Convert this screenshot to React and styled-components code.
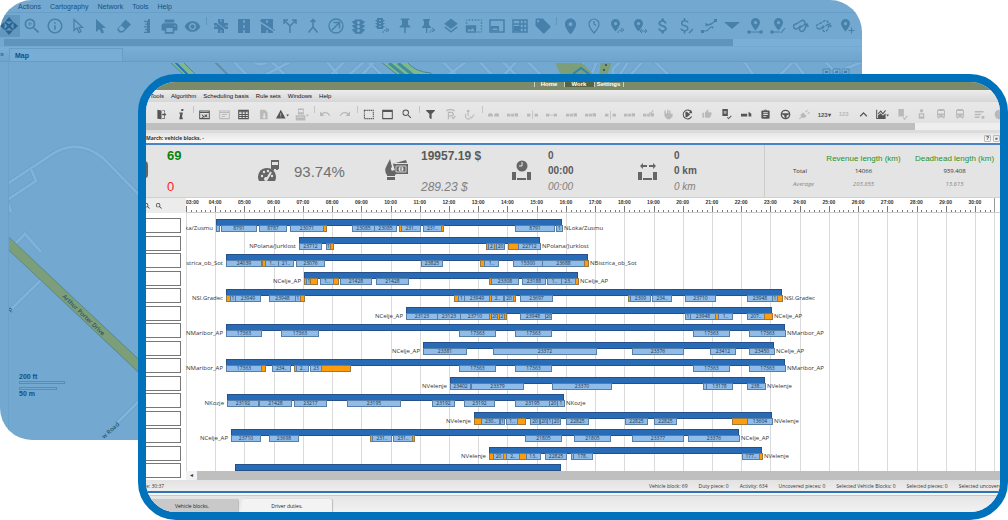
import {
  MdZoomIn,
  MdInfoOutline,
  MdPrint,
  MdVisibility,
  MdLayers,
  MdLocationOn,
  MdLocalOffer,
  MdAttachMoney,
  MdPushPin,
  MdTraffic,
  MdPhotoSizeSelectLarge,
  MdUndo,
  MdRedo,
  MdThumbUp,
  MdAssignment,
  MdKeyboardArrowUp,
  MdDirectionsBus,
  MdSearch,
} from "react-icons/md";
import { FaFilter } from "react-icons/fa";
import styled, { createGlobalStyle } from "styled-components";

const DARK = "#555";

/* timeline units, one unit is about two minutes */
const CHART_WIDTH = 814;
const HOUR = 29.22;
const pct = (units) => `${(units / CHART_WIDTH) * 100}%`;

const hours = Array.from({ length: 28 }, (_, i) => i + 3);
const minorTicks = Array.from({ length: 167 }, (_, i) => i).filter((i) => i % 6);

// [start, end, number], "!" is a piece without passengers
const blocks = [
  {
    stop: "NLoka/Zusmu",
    start: 30,
    end: 376,
    pieces: [
      [30, 33, ""], [35, 70, "8791"], [73, 100, "8787"], [104, 137, "23071"], [137, 140, "!"],
      [166, 188, "23085"], [188, 210, "23085"], [213, 215, "!"], [215, 234, "231.."],
      [237, 255, "231.."], [255, 257, "!"], [329, 368, "8791"], [370, 376, "1"],
    ],
  },
  {
    stop: "NPolana/Jurklost",
    start: 113,
    end: 354,
    pieces: [
      [113, 135, "23712"], [140, 144, "1"], [144, 147, "!"], [300, 302, "!"], [302, 308, "2"],
      [308, 310, "!"], [310, 318, "20"], [322, 332, "!"], [332, 354, "22712"],
    ],
  },
  {
    stop: "NBistrica_ob_Sot",
    start: 40,
    end: 402,
    pieces: [
      [40, 75, "24039"], [76, 79, "!"], [79, 92, "1.."], [92, 107, "21.."], [110, 138, "23076"],
      [235, 256, "23825"], [294, 298, "!"], [298, 312, "1.."], [327, 356, "15300"],
      [356, 398, "23688"], [398, 402, "!"],
    ],
  },
  {
    stop: "NCelje_AP",
    start: 118,
    end: 392,
    pieces: [
      [118, 121, "!"], [120, 125, "1"], [124, 131, "!"], [134, 147, "1.."], [147, 152, "!"],
      [154, 185, "21428"], [190, 222, "21428"], [303, 305, "!"], [305, 332, "23308"],
      [336, 359, "23188"], [361, 375, "1.."], [375, 389, "23.."], [389, 392, "!"],
    ],
  },
  {
    stop: "NSl.Gradec",
    start: 40,
    end: 596,
    pieces: [
      [40, 44, "!"], [44, 49, "1"], [49, 74, "23949"], [83, 109, "23948"], [109, 114, "1"],
      [114, 118, "!"], [268, 272, "!"], [272, 278, "1"], [278, 303, "23949"], [303, 305, "!"],
      [305, 317, "2.."], [318, 327, "20"], [327, 329, "!"], [334, 366, "23697"], [442, 444, "!"],
      [444, 464, "2309"], [466, 485, "234.."], [499, 529, "23710"], [561, 586, "23948"],
      [586, 591, "1"], [591, 596, "!"],
    ],
  },
  {
    stop: "NCelje_AP",
    start: 220,
    end: 586,
    pieces: [
      [220, 251, "23123"], [251, 274, "23123"], [274, 303, "23710"], [303, 305, "!"],
      [305, 312, "20"], [311, 313, "!"], [313, 318, "2"], [318, 320, "!"], [334, 359, "23948"],
      [359, 365, "20"], [499, 504, "1"], [504, 529, "23948"], [529, 532, "!"], [532, 546, "1.."],
      [561, 578, "207.."], [578, 586, "!"],
    ],
  },
  {
    stop: "NMaribor_AP",
    start: 40,
    end: 599,
    pieces: [
      [40, 75, "17363"], [95, 132, "17363"], [273, 309, "17363"], [329, 365, "17363"],
      [507, 543, "17363"], [563, 599, "17363"],
    ],
  },
  {
    stop: "NCelje_AP",
    start: 237,
    end: 588,
    pieces: [
      [237, 280, "23381"], [307, 410, "23372"], [446, 497, "23376"], [524, 549, "23412"],
      [563, 588, "23450"],
    ],
  },
  {
    stop: "NMaribor_AP",
    start: 40,
    end: 599,
    pieces: [
      [40, 75, "17363"], [75, 79, "!"], [86, 104, "234.."], [108, 110, "!"], [110, 122, "2.."],
      [124, 135, "23"], [135, 164, "!"], [273, 309, "17363"], [329, 365, "17363"],
      [507, 543, "17363"], [563, 599, "17363"],
    ],
  },
  {
    stop: "NVelenje",
    start: 264,
    end: 579,
    pieces: [
      [264, 284, "23402"], [285, 337, "23379"], [366, 425, "23370"], [517, 520, ""],
      [520, 546, "13178"], [561, 579, "238.."],
    ],
  },
  {
    stop: "NKozje",
    start: 41,
    end: 378,
    pieces: [
      [41, 72, "23192"], [73, 105, "21428"], [108, 140, "23217"], [161, 214, "23195"],
      [246, 268, "23192"], [278, 308, "23192"], [329, 363, "23195"], [363, 371, "20"],
      [371, 378, "1"],
    ],
  },
  {
    stop: "NVelenje",
    start: 288,
    end: 586,
    pieces: [
      [288, 295, "!"], [295, 313, "230.."], [314, 318, "1"], [320, 331, "1.."], [331, 339, "!"],
      [344, 353, "20"], [354, 361, "20"], [361, 366, "1"], [366, 374, "20"], [380, 402, "22825"],
      [439, 461, "22825"], [468, 490, "22825"], [546, 561, "!"], [561, 586, "13604"],
    ],
  },
  {
    stop: "NCelje_AP",
    start: 45,
    end: 553,
    pieces: [
      [45, 74, "23710"], [83, 112, "23698"], [184, 186, "!"], [186, 205, "231.."],
      [207, 226, "231.."], [226, 228, "!"], [339, 375, "21805"], [388, 424, "21805"],
      [446, 497, "23377"], [502, 553, "23376"],
    ],
  },
  {
    stop: "NVelenje",
    start: 303,
    end: 576,
    pieces: [
      [303, 307, "!"], [307, 317, "20"], [317, 320, "!"], [320, 333, "2.."], [333, 340, "!"],
      [340, 354, "13.."], [359, 380, "22825"], [385, 387, ""], [387, 406, "178.."],
      [556, 573, "177.."], [573, 576, "!"],
    ],
  },
  { stop: "", start: 49, end: 375, pieces: [] },
];

const Draw = ({ children, size = 16, w = size, box = "0 0 16 16" }) => (
  <svg width={w} height={size} viewBox={box} fill="currentColor" stroke="none">
    {children}
  </svg>
);

const Line = (props) => <path fill="none" stroke="currentColor" strokeWidth="1.5" {...props} />;

const pin = "M6.5 1a4.5 4.5 0 0 0-4.5 4.5c0 3 4.5 8 4.5 8s4.5-5 4.5-8A4.5 4.5 0 0 0 6.5 1zm0 3a1.6 1.6 0 1 1 0 3.2 1.6 1.6 0 0 1 0-3.2z";

const mapTools = [
  <Draw key="pan" size={18}>
    <path d="M8 0l3.5 4h-7zM8 16l3.5-4h-7zM0 8l4-3.5v7zM16 8l-4-3.5v7z" />
    <path d="M5 4l3 2.500L11 4l1 1-2.500 3L12 11l-1 1-3-2.500L5 12l-1-1 2.500-3L4 5z" />
  </Draw>,
  <MdZoomIn key="zoom" size={20} />,
  <MdInfoOutline key="info" size={18} />,
  <Draw key="select">
    <Line d="M4 1.5v11l3-2.5 2 4.5 2-1-2-4.2h3.5z" strokeWidth="1.3" />
  </Draw>,
  <Draw key="cursor">
    <path d="M3 1v13l3.500-3 2 4.500 2.500-1-2-4.500h4z" />
  </Draw>,
  <Draw key="eraser">
    <path d="M9.5 1.500l5.500 5-8 8H3.500L1 11.500zM5 7.500L2.500 11l2 2h1.800L9 10.800z" fillRule="evenodd" />
  </Draw>,
  <Draw key="ruler">
    <path d="M9 1h2v14H5v-1.300h3v-1.500H6v-1.200h2V9.500H5V8.200h3V6.700H6V5.500h2V4H5V2.700h4z" />
  </Draw>,
  <MdPrint key="print" size={19} />,
  <MdVisibility key="eye" size={17} />,
  null,
  <Draw key="cross">
    <path d="M5 1h6v4h4v6h-4v4H5v-4H1V5h4z" />
    <path d="M3 4l10 8" stroke="#73a9d0" />
    <path d="M8 1v3M8 12v3M1 8h3M12 8h3" stroke="#73a9d0" />
  </Draw>,
  <Draw key="road">
    <path d="M2 1h12v14H2z" />
    <path d="M8 2v3M8 7v3M8 12v3" stroke="#73a9d0" strokeWidth="1.5" />
  </Draw>,
  <Draw key="noroad">
    <path d="M2 1h12v14H2z" />
    <path d="M8 2v3M8 12v3M1 4l14 9" stroke="#73a9d0" strokeWidth="1.5" />
    <path d="M1 2.500l15 10" stroke="currentColor" />
  </Draw>,
  <Draw key="split">
    <Line d="M8 15V8L3 3M8 8l5-5M2 6V2h4M14 6V2h-4" />
  </Draw>,
  <Draw key="merge">
    <Line d="M8 2v7l-4.500 5.500M8 9l4.500 5.500M5.500 4L8 1.500 10.500 4" />
  </Draw>,
  <Draw key="turn">
    <circle cx="8" cy="8" r="7" fill="none" stroke="currentColor" strokeWidth="1.3" />
    <Line d="M4 12l7-7M5.500 4.500h6v6" />
  </Draw>,
  <MdTraffic key="light" size={19} />,
  <Draw key="lightgo">
    <path d="M3 0h6v2h2L9 4v1h2L9 7v1h2l-2 2v1H3v-1L1 8h2V7L1 5h2V4L1 2h2z" />
    <path d="M5 2h2v1H5zM5 5h2v1H5zM5 8h2v1H5z" fill="#73a9d0" />
    <Line d="M9 15c0-2 1-3 4-3M12 10l3 2-3 2" strokeWidth="1" />
  </Draw>,
  <MdPushPin key="pin" size={18} />,
  <Draw key="pingo">
    <path d="M3 1h7v1.500H9V7l2 2v1H7.300v5H6v-5H2V9l2-2V2.500H3z" />
    <Line d="M10 15c0-2 1-3 3-3M12 10l3 2-3 2" strokeWidth="1" />
  </Draw>,
  <MdLayers key="layers" size={18} />,
  <MdPhotoSizeSelectLarge key="selarea" size={18} />,
  <Draw key="resize">
    <Line d="M1 2h14v12H1z" />
    <path d="M2 8h8v5H2z" />
    <path d="M3 12l2-2 1 1 1-1 2 2z" fill="#73a9d0" />
  </Draw>,
  <Draw key="gridsel">
    <Line d="M1 2h14v12H1zM1 6h14M8 2v12M11.500 2v12M8 10h7" />
    <path d="M2 8h6v5H2z" />
  </Draw>,
  <MdLocalOffer key="tag" size={18} />,
  null,
  <MdLocationOn key="place" size={19} />,
  <Draw key="clock">
    <Line d="M8 15S3 9.500 3 6a5 5 0 0 1 10 0c0 3.500-5 9-5 9zM8 3v3l2 1.500" strokeWidth="1.2" />
  </Draw>,
  <Draw key="placego">
    <path d={pin} />
    <Line d="M9 15c0-2 1-3 4-3M12 10l3 2-3 2" strokeWidth="1" />
  </Draw>,
  <Draw key="placeboth">
    <path d={pin} />
    <Line d="M10 11l-2 2 2 2M13 11l2 2-2 2M9 13h6" strokeWidth="1" />
  </Draw>,
  <MdAttachMoney key="cost" size={20} />,
  <Draw key="costedit">
    <Line d="M10 4.500C9.500 3 8 2.700 6.700 2.700c-4 0-4 4.300 0 5s4.300 5 0 5C5 12.700 3.500 12 3 10.500M6.500 0v3M6.500 13v2.500M11 15l4-4" />
  </Draw>,
  <Draw key="route">
    <Line d="M2 13h3c3 0 2-3 5-4M6 7c3 0 5-1 8-4" strokeWidth="1.2" />
    <path d="M0 12h3v3H0zM13 1h3v3h-3zM4 5l3 1-2 3zM10 8l3 1-2 2z" />
  </Draw>,
  <Draw key="down">
    <path d="M0 4h16l-8 7z" />
  </Draw>,
  <Draw key="stoproute">
    <path d={pin} transform="translate(2 -1)" />
    <Line d="M3 14h10" strokeWidth="1" />
    <circle cx="2" cy="14" r="1.8" />
    <circle cx="14" cy="14" r="1.8" />
  </Draw>,
  <Draw key="stopedit">
    <path d={pin} transform="translate(2 -1)" />
    <Line d="M3 14h7M11 15l4-5" strokeWidth="1.2" />
    <circle cx="2" cy="14" r="1.8" />
  </Draw>,
  <Draw key="loop">
    <Line d="M3 11a2.500 2.500 0 0 1 0-5l5-3a2.500 2.500 0 0 1 3 4L7 9.500a2.500 2.500 0 0 0 2 4c3-.500 3-4 5-7M11.500 7l2.700-1 1 3" strokeWidth="1.4" />
    <Line d="M3 11c2 0 3-2 5-3" strokeWidth="1.4" />
  </Draw>,
  <Draw key="loopdash">
    <Line d="M3 11a2.500 2.500 0 0 1 0-5l5-3a2.500 2.500 0 0 1 3 4L7 9.500a2.500 2.500 0 0 0 2 4c3-.500 3-4 5-7M11.500 7l2.700-1 1 3" strokeWidth="1.4" strokeDasharray="3 1" />
    <Line d="M3 11c2 0 3-2 5-3" strokeWidth="1.4" />
  </Draw>,
  <Draw key="addplace">
    <path d={pin} />
    <Line d="M12.500 9.500v6M9.500 12.500h6" strokeWidth="1.2" />
  </Draw>,
];

const Small = (props) => <Draw size={11} {...props} />;

const train = "M0 7h5v4H0zM6 7h4v4H6zM11 6h5v5h-5z";

// [icon, enabled]
const planTools = [
  [<Small key="exit"><path d="M2 1l6 1v13l-6-1zM9 2h4v3h-1V3H9zM9 14h4v-4h-1v3H9z" /><path d="M9 7h3V5l3 3-3 3V9H9z" /></Small>, true],
  [<Small key="i"><path d="M8 0h3l-.6 3h-3zM5 5h5L8.500 12.500h1.500L9.700 15H4.800l1.400-8H4.700z" /></Small>, true],
  null,
  [<Small key="a"><Line d="M1 3h14v11H1zM1 5h14M4 8l3 3-3 2M8 8l4 4M12 8l-4 4" /></Small>, true],
  [<Small key="b"><Line d="M1 3h14v11H1zM1 5h14M4 8h8M4 11h5" /></Small>, false],
  [<Small key="c"><Line d="M1 2h14v12H1zM1 4h14M1 8h14M1 11h14M6 3v11M10.500 3v11" /></Small>, true],
  [<Small key="d"><path d="M3 1h7l4 4v10H3zM8 6v5H6l3 3 3-3h-2V6z" fillRule="evenodd" /></Small>, false],
  [<Small key="e" w={13} box="0 0 19 16"><path d="M7 1l7 13H0zM15 8h4l-2 3z" /><path d="M6.500 6h1v4h-1zM6.500 11h1v1h-1z" fill="#e4e4e4" /></Small>, true],
  [<Small key="f" size={13} w={14} box="0 0 19 16"><path d="M4 0h8v8H4zM15 8h4l-2 3zM1 9h13v7H1z" /><path d="M5 2h6v3H5zM3 11h9v1H3z" fill="#e4e4e4" /></Small>, false],
  null,
  [<MdUndo key="undo" size={12} />, false],
  [<MdRedo key="redo" size={12} />, false],
  null,
  [<Small key="g"><Line d="M2 2h13v12H2z" strokeDasharray="2 1" /></Small>, true],
  [<Small key="h"><Line d="M1 2h14v12H1zM1 3.500h14" /></Small>, true],
  [<MdSearch key="find" size={12} />, true],
  null,
  [<FaFilter key="filter" size={9} />, true],
  [<Small key="p"><Line d="M5 15V5h4c4 0 4 5 0 5H5M2 3c3-3 9-3 12 0M10 12l2 2 3-4" strokeWidth="1.8" /></Small>, false],
  [<Small key="q"><circle cx="6" cy="3" r="2" /><Line d="M6 5v5M3 7c-3 6 3 9 6 7M8 11l3 2 4-5" /></Small>, false],
  null,
  [<Small key="t1"><path d="M0 8l2-2h3l2 2v3H0zM9 8l2-2h3l2 2v3H9z" /></Small>, false],
  [<Small key="t2"><path d={train} /></Small>, false],
  [<Small key="t3"><path d="M0 7h5v4H0zM11 7h5v4h-5zM7.500 2h1v12h-1z" /></Small>, false],
  [<Small key="t4"><path d="M0 7h5v4H0zM11 7h5v4h-5zM6 8.500h4v1H6z" /></Small>, false],
  [<Small key="t5"><path d={train} /></Small>, false],
  [<Small key="t6"><path d={train} /></Small>, false],
  [<Small key="t7"><path d="M0 7h5v4H0zM11 7h5v4h-5zM7.500 3h1v12h-1z" /></Small>, false],
  [<Small key="t8"><path d={train} /></Small>, false],
  [<Small key="t9"><path d={train} /><Line d="M9 5l2 2 4-5" /></Small>, false],
  [<Small key="hand"><path d="M2 2h2v4h2V1h2v5h1V2h2v5h3v4l-4 4H6L2 10z" /></Small>, false],
  [<Small key="go"><Line d="M14 5a6.500 6.500 0 1 0 0 6" /><path d="M5 4h2l5 4-5 4H5zM13 1l2 5h-5z" /></Small>, true],
  [<MdThumbUp key="thumb" size={10} />, false],
  [<Small key="doc"><path d="M2 0h8v10H2z" /><Line d="M9 12l2 2 4-4" /><path d="M4 3h4v4H4z" fill="#aaa" /></Small>, true],
  [<Small key="move"><path d="M0 7h9v4H0zM11 4l4 3v4h-4z" /></Small>, true],
  [<MdAssignment key="clip" size={11} />, true],
  [<Small key="wheel"><circle cx="8" cy="8" r="6" fill="none" stroke="currentColor" strokeWidth="2" /><path d="M3 6h10v2l-3 1-1 4H7L6 9 3 8z" /></Small>, true],
  [<Small key="plug"><path d="M6 5l5 5-2 2c-2 2-4 1-5 0l-3 3-1-1 3-3c-1-1-1-3 1-4zM9 4l3-3 1 1-3 3zM12 7l3-3 1 1-3 3z" /></Small>, false],
  ["123▾", true],
  ["123", false],
  [<MdKeyboardArrowUp key="up" size={15} />, true],
  [<Small key="chart" w={13} box="0 0 19 16"><Line d="M1 1v13h13M3 7l4-4 3 4 4-5" /><path d="M3 13V9l4-3 3 4 4-4v7zM15 8h4l-2 3z" /></Small>, true],
  [<Small key="doc2"><path d="M2 0h8v11H2z" /><Line d="M9 12l2 3 4-5" /></Small>, false],
  [<Small key="man"><circle cx="8" cy="2.500" r="2.500" /><path d="M4 6h8v8H4z" /><path d="M6 8h4v3H6z" fill="#e4e4e4" /></Small>, false],
  [<MdDirectionsBus key="bus1" size={12} />, false],
  [<MdDirectionsBus key="bus2" size={12} />, false],
  [<Small key="list"><path d="M1 3h13v2H1zM1 7h9v2H1zM1 11h7v2H1zM11 10h4v4h-4z" /></Small>, false],
  [<Small key="globe"><circle cx="8" cy="8" r="7" /></Small>, false],
];

const roads = [
  "M-2 121L42 92Q68 74 94 95L132 134",
  "M-2 137L27 118 22 106",
  "M-2 137L2 149",
  "M7 180L16 171 32 189",
  "M32 217L-2 250",
  "M134 334L107 361",
  "M224 -2L240 14M262 -2L278 14M246 0Q252 3 258 -1M283 -2L256 12",
  "M317 -2L331 14M336 -2L320 14M340 12L356 -2M366 -2L352 13M360 0L374 13",
  "M434 -1L448 13M458 -2L438 13M470 -2L484 13M493 -2L508 13M508 -2L494 13M518 -2L534 14",
  "M575 -2L568 13M588 -2L582 13M612 -2L604 6V13M620 -2L610 13M634 -2L620 14M645 -2L662 14",
  "M735 -2L745 13M770 13L785 -2 796 13M815 -2L828 10M856 -2L830 8",
];

const StreetMap = () => (
  <MapSvg viewBox="0 0 854 377" preserveAspectRatio="xMinYMin slice">
    {roads.map((d) => (
      <g key={d} fill="none">
        <path d={d} stroke="#659cc5" strokeWidth="4" />
        <path d={d} stroke="#7fb3da" strokeWidth="3" />
      </g>
    ))}
    <path d="M-4 177L134 307" stroke="#517f86" strokeWidth="10" />
    <path d="M-4 177L134 307" stroke="#7c9f79" strokeWidth="9" />
    <path d="M161 -1h13l14 14h-12z" fill="#7fb88c" stroke="#4d83a0" />
    <path d="M166 -1l14 14" stroke="#2676c0" strokeWidth="2" />
    <path d="M206 -1l13 13" stroke="#5f8dac" strokeWidth="2" />
    <path d="M372 -1h26q8 10 24 11v3h-32z" fill="#7fb88c" stroke="#4d83a0" />
    <path d="M380 0l16 13M389 0l16 13" stroke="#3f8f9f" strokeWidth="3" />
    <path d="M546 -1h26l14 14h-34z" fill="#7c9f79" />
    <path d="M564 11l8-6 8 6" stroke="#2f86ad" strokeWidth="2" fill="none" />
    <path d="M592 -1h11l-5 14h-8z" fill="#7c9f79" />
    <circle cx="597" cy="2" r="1" fill="#345" />
    <circle cx="595" cy="7" r="1" fill="#345" />
    <path d="M814 12V6h7v6M824 12V6h7v6M833 12V6h7v6" fill="none" stroke="#4d8ab8" />
    <path d="M816 9h3M826 9h3M835 9h3" stroke="#164f7e" />
    <MapText transform="translate(53 234) rotate(44)">Arthur Porter Drive</MapText>
    <MapText transform="translate(95 376) rotate(-42)">w Road</MapText>
    <MapText transform="translate(1 249) rotate(-50)">p</MapText>
  </MapSvg>
);

const Block = ({ stop, start, end, pieces }) => (
  <BlockRow>
    <Stop style={{ right: pct(CHART_WIDTH - start + 3) }}>{stop}</Stop>
    <Bar style={{ left: pct(start), width: pct(end - start) }} />
    {pieces.map(([from, to, number]) => (
      <Piece
        key={from}
        $empty={number === "!"}
        style={{ left: pct(from), width: `calc(${pct(to - from)} + 1px)` }}
      >
        {number !== "!" && number}
      </Piece>
    ))}
    <Stop style={{ left: pct(end + 2) }}>{stop}</Stop>
  </BlockRow>
);

const MapApp = () => (
  <MapWindow>
    <MapMenu>
      {["Actions", "Cartography", "Network", "Tools", "Help"].map((m) => (
        <MapMenuItem key={m}>{m}</MapMenuItem>
      ))}
    </MapMenu>
    <MapToolbar>
      {mapTools.map((icon, i) =>
        icon ? (
          <MapTool key={i} $active={i === 0} aria-label={icon.key}>
            {icon}
          </MapTool>
        ) : (
          <MapSeparator key={i} />
        )
      )}
    </MapToolbar>
    <MapStrip>
      <span />
    </MapStrip>
    <MapTabs>
      <Expand>»</Expand>
      <MapTab>Map</MapTab>
    </MapTabs>
    <MapCanvas>
      <StreetMap />
      <Scale>
        200 ft
        <ScaleLine $width={46} />
        <ScaleLine $width={38} />
        50 m
      </Scale>
    </MapCanvas>
  </MapWindow>
);

const Planner = () => (
  <PlannerWindow>
    <Header>
      <NavItem href="#home">Home</NavItem>
      <NavItem href="#work" $active>
        Work
      </NavItem>
      <NavItem href="#settings">Settings</NavItem>
    </Header>
    <Menu>
      {["Tools", "Algorithm", "Scheduling basis", "Rule sets", "Windows", "Help"].map((m) => (
        <MenuItem key={m}>{m}</MenuItem>
      ))}
    </Menu>
    <Toolbar>
      {planTools.map((tool, i) =>
        tool ? (
          <Tool key={i} $enabled={tool[1]} aria-label={tool[0].key}>
            {tool[0]}
          </Tool>
        ) : (
          <Separator key={i} />
        )
      )}
    </Toolbar>
    <Strip>
      <span />
    </Strip>
    <TitleBar>
      <h1>March: vehicle blocks. -</h1>
      <TitleButton>?</TitleButton>
      <TitleButton>«</TitleButton>
    </TitleBar>
    <Stats>
      <Stat $icon={21}>
        <svg width="10" height="22" viewBox="4 0 10 22" fill="#666">
          <path d="M0 1h3q3 0 3 4v10q0 3-3 3v2H0z" />
        </svg>
        <Values $size={13}>
          <Value $color="#0a820a" $bold>69</Value>
          <Value $color="#f22">0</Value>
        </Values>
      </Stat>
      <Stat $icon={36}>
        <svg width="23" height="24" viewBox="0 0 23 24" fill="#666">
          <path d="M13 1h8v9h-1v1h-2v-1h-2v1h-2v-1h-1z" />
          <path d="M14 3h6v3h-6z" fill="#e4e4e4" />
          <path d="M1 22a9 9 0 1 1 16 0z" />
          <path d="M9 20l4-7" stroke="#e4e4e4" strokeWidth="2" />
          <g fill="#e4e4e4">
            <circle cx="4" cy="17" r="1.2" />
            <circle cx="6" cy="13" r="1.2" />
            <circle cx="10" cy="12" r="1.2" />
            <circle cx="14" cy="17" r="1.2" />
            <circle cx="8" cy="20" r="2" />
          </g>
        </svg>
        <Percent>93.74%</Percent>
      </Stat>
      <Stat $icon={36}>
        <svg width="24" height="24" viewBox="0 0 24 24" fill="#666">
          <path d="M5 0L1 8q-2 4 1 8v1h8v-1l3-3-4-2-2 1q-2-3 0-4z" />
          <path d="M2 18h8v3H2z" />
          <path d="M7 5l14-4 1 3H9zM8 5h15v10H11z" />
          <path d="M11 7h10v6H11z" fill="none" stroke="#ccc" />
          <circle cx="16" cy="10" r="2.5" fill="#ddd" />
          <path d="M16 8v4" stroke="#5c5c5c" />
        </svg>
        <Values $size={12}>
          <Value $bold>19957.19 $</Value>
          <Value $italic>289.23 $</Value>
        </Values>
      </Stat>
      <Stat $icon={36}>
        <svg width="19" height="24" viewBox="0 0 19 24" fill="#666">
          <circle cx="10" cy="7" r="5.5" />
          <path d="M10 3v4H7" stroke="#eee" fill="none" />
          <path d="M0 13h4v8H0zM15 13h4v8h-4zM5 19h9v2H5z" />
        </svg>
        <Values $size={10}>
          <Value $bold>0</Value>
          <Value $bold>00:00</Value>
          <Value $italic>00:00</Value>
        </Values>
      </Stat>
      <Stat $icon={36}>
        <svg width="20" height="24" viewBox="0 0 20 24" fill="#666">
          <path d="M0 13h4v8H0zM15 13h4v8h-4zM5 19h9v2H5zM2 7l3-3v2h4v2H5v2zM18 7l-3-3v2h-4v2h4v2z" />
        </svg>
        <Values $size={10}>
          <Value $bold>0</Value>
          <Value $bold>0 km</Value>
          <Value $italic>0 km</Value>
        </Values>
      </Stat>
      <LengthsPanel>
        <Lengths>
          <thead>
            <tr>
              <td />
              <th>Revenue length (km)</th>
              <th>Deadhead length (km)</th>
            </tr>
          </thead>
          <tbody>
            <tr>
              <td>Total</td>
              <td>14066</td>
              <td>939.408</td>
            </tr>
            <AverageRow>
              <td>Average</td>
              <td>203.855</td>
              <td>13.615</td>
            </AverageRow>
          </tbody>
        </Lengths>
      </LengthsPanel>
    </Stats>
    <Body>
      <Sidebar>
        <SideTools>
          <MdSearch size={8} />
          <MdSearch size={8} />
        </SideTools>
        <SideList>
          {blocks.map((_, i) => (
            <SideItem key={i} />
          ))}
        </SideList>
      </Sidebar>
      <Chart>
        <Ruler>
          {hours.map((h, i) => (
            <Hour key={h} $first={i === 0} style={{ left: pct(i * HOUR) }}>
              {String(h).padStart(2, "0")}:00
            </Hour>
          ))}
          {minorTicks.map((t) => (
            <Tick key={t} style={{ left: pct((t * HOUR) / 6) }} />
          ))}
          <EndMark style={{ left: pct(808) }} />
        </Ruler>
        <Plot>
          {hours.map((h, i) => (
            <GridLine key={h} style={{ left: pct(i * HOUR) }} />
          ))}
          <GridLine style={{ left: pct(808) }} />
          <Rows>
            {blocks.map((block, i) => (
              <Block key={i} {...block} />
            ))}
          </Rows>
        </Plot>
        <ScrollBar>
          <button aria-label="left">◂</button>
          <span />
        </ScrollBar>
      </Chart>
    </Body>
    <StatusBar>
      <Clock>e: 30:37</Clock>
      <span>Vehicle block: 69</span>
      <span>Duty piece: 0</span>
      <span>Activity: 634</span>
      <span>Uncovered pieces: 0</span>
      <span>Selected Vehicle Blocks: 0</span>
      <span>Selected pieces: 0</span>
      <span>Selected uncovered</span>
    </StatusBar>
    <Tabs>
      <Tab $active>Vehicle blocks.</Tab>
      <Tab>Driver duties.</Tab>
    </Tabs>
  </PlannerWindow>
);

const App = () => (
  <Desktop>
    <GlobalStyle />
    <MapApp />
    <Planner />
  </Desktop>
);

export default App;

const GlobalStyle = createGlobalStyle`
  * {
    box-sizing: border-box;
  }

  body {
    margin: 0;
    background-color: #fff;
    font-family: "Liberation Sans", Arial, sans-serif;
    overflow: hidden;
  }

  button {
    font: inherit;
    color: inherit;
    background-color: transparent;
    border: none;
    padding: 0;
    margin: 0;
    flex: none;
    cursor: pointer;
  }

  svg {
    display: block;
    flex: none;
  }
`;

const Desktop = styled.div`
  display: grid;
  grid-template-columns: 1fr;
  align-items: start;

  > * {
    grid-area: 1 / 1;
    min-width: 0;
  }
`;

/* map window */

const MapWindow = styled.section`
  margin-right: 146px;
  border-radius: 32px;
  overflow: hidden;
  background-color: #73a9d0;
  color: #164f7e;
`;

const MapMenu = styled.nav`
  display: flex;
  gap: 9px;
  height: 13px;
  padding-left: 18px;
  border-bottom: 1px solid #689fc8;
`;

const MapMenuItem = styled.button`
  font-size: 7px;
  line-height: 11px;
`;

const MapToolbar = styled.div`
  display: flex;
  align-items: center;
  height: 26px;
  margin-left: -3px;
  color: #4780aa;
`;

const MapTool = styled.button`
  width: 23px;
  height: 22px;
  display: flex;
  align-items: center;
  justify-content: center;
  color: ${(props) => props.$active && "#2b6593"};
  background-color: ${(props) => props.$active && "#6298c0"};
`;

const MapSeparator = styled.span`
  flex: none;
  width: 1px;
  height: 8px;
  margin: 0 2px 10px;
  background-color: #5f97c0;
`;

const MapStrip = styled.div`
  height: 8px;
  display: flex;
  margin-left: 4px;
  padding-bottom: 1px;

  > span {
    width: 85%;
    background-color: #5f95bc;
  }

  &::after {
    content: "";
    flex: 1;
    background-color: #7ab0d8;
  }
`;

const MapTabs = styled.div`
  display: flex;
  align-items: flex-end;
  gap: 5px;
  height: 15px;
  border-bottom: 1px solid #669dc6;
  background: linear-gradient(#7ab0d8, #6fa5cc);
`;

const Expand = styled.button`
  width: 4px;
  font-size: 7px;
  line-height: 12px;
`;

const MapTab = styled.button`
  width: 114px;
  height: 13px;
  padding-left: 5px;
  border: 1px solid #679ec7;
  border-bottom: none;
  background-color: #78aed6;
  font-size: 7px;
  font-weight: bold;
  text-align: left;
`;

const MapCanvas = styled.div`
  position: relative;
  height: 378px;
  margin: 0 0 0 8px;
  padding-top: 1px;
  border-left: 1px solid #6ba2ca;
`;

const MapSvg = styled.svg`
  width: 100%;
  height: 377px;
`;

const MapText = styled.text`
  font-family: "Open Sans", sans-serif;
  font-size: 6px;
  font-weight: 600;
  fill: #1f5570;
`;

const Scale = styled.div`
  position: absolute;
  left: 10px;
  bottom: 42px;
  font-size: 7px;
  line-height: 8px;
  font-weight: bold;
`;

const ScaleLine = styled.div`
  width: ${(props) => props.$width}px;
  height: 3px;
  border: 1px solid #4d90c2;

  & + & {
    margin-top: 3px;
  }
`;

/* planner window */

const PlannerWindow = styled.section`
  position: relative;
  margin: 74px 0 0 138px;
  border: 8px solid #0072bc;
  border-radius: 38px;
  overflow: hidden;
  background-color: #e4e4e4;
  color: #333;
`;

const Header = styled.nav`
  display: flex;
  justify-content: center;
  height: 8px;
  padding-left: 11px;
  background-color: #7b8a68;
`;

const NavItem = styled.a`
  width: 30px;
  height: 5px;
  color: #fff;
  font-size: 6px;
  line-height: 4px;
  font-weight: bold;
  text-align: center;
  text-decoration: none;
  border-left: 1px solid #c8cfbd;
  background-color: ${(props) => props.$active && "#566446"};

  &:last-child {
    border-right: 1px solid #c8cfbd;
  }
`;

const Menu = styled.nav`
  display: flex;
  gap: 7px;
  height: 12px;
  padding-left: 4px;
  background: linear-gradient(#ececec, #d6d6d6);
`;

const MenuItem = styled.button`
  font-size: 6px;
  line-height: 12px;
  color: #111;
`;

const Toolbar = styled.div`
  display: flex;
  align-items: center;
  height: 21px;
  margin-right: -9px;
  padding: 3px 0 0 6px;
  background: linear-gradient(#e8e8e8, #e2e2e2);
`;

const Tool = styled.button`
  flex: 1;
  min-width: 0;
  display: flex;
  align-items: center;
  justify-content: center;
  color: ${(props) => (props.$enabled ? DARK : "#b9b9b9")};
  font-size: 6px;
  font-weight: bold;
`;

const Separator = styled.span`
  width: 1px;
  height: 7px;
  margin: 0 1px 10px 2px;
  background-color: #c4c4c4;
`;

const Strip = styled.div`
  display: flex;
  height: 7px;
  background-color: #eee;

  > span {
    width: 90%;
    background-color: #bfbfbf;
  }
`;

const TitleBar = styled.div`
  display: flex;
  align-items: center;
  gap: 2px;
  height: 15px;
  border-bottom: 2px solid #4b84c4;
  border-top: 3px solid #dcdcdc;
  background: linear-gradient(#e6e6e6, #fafafa);

  > h1 {
    flex: 1;
    margin: 0;
    font-family: "Open Sans", sans-serif;
    font-size: 5px;
    font-weight: bold;
  }
`;

const TitleButton = styled.button`
  width: 7px;
  height: 7px;
  border: 1px solid #bbb;
  border-radius: 1px;
  font-size: 5px;
  line-height: 5px;
  font-weight: bold;
`;

const Stats = styled.div`
  display: grid;
  grid-template-columns: 112px 127px 127px 126px 126px 1fr;
  height: 53px;
  border-bottom: 1px solid #d0d0d0;
`;

const Stat = styled.div`
  display: grid;
  grid-template-columns: ${(props) => props.$icon}px 1fr;
  align-items: center;
`;

const Values = styled.div`
  display: flex;
  flex-direction: column;
  justify-content: space-between;
  height: 45px;
  font-size: ${(props) => props.$size}px;
  line-height: 14px;
`;

const Value = styled.span`
  color: ${(props) => props.$color || (props.$italic ? "#808080" : "#5a5a5a")};
  font-weight: ${(props) => (props.$bold ? "bold" : "normal")};
  font-style: ${(props) => (props.$italic ? "italic" : "normal")};
`;

const Percent = styled.span`
  color: #707070;
  font-size: 15px;
`;

const LengthsPanel = styled.div`
  padding-top: 7px;
  border-left: 1px solid #ccc;
`;

const Lengths = styled.table`
  width: 100%;
  border-collapse: collapse;
  font-family: "Open Sans", sans-serif;
  font-size: 6px;
  line-height: 13px;
  text-align: center;

  th {
    padding: 0;
    width: 91px;
    color: #279227;
    font-family: "Liberation Sans", sans-serif;
    font-size: 8px;
    font-weight: normal;
    white-space: nowrap;
  }

  td {
    padding: 0;
  }

  td:first-child {
    text-align: left;
    padding-left: 28px;
  }
`;

const AverageRow = styled.tr`
  color: #888;
  font-style: italic;
`;

const Body = styled.div`
  display: grid;
  grid-template-columns: 40px 1fr;
  height: 282px;
  overflow: hidden;
`;

const Sidebar = styled.div`
  background-color: #fff;
`;

const SideTools = styled.div`
  display: flex;
  align-items: flex-end;
  gap: 4px;
  height: 15px;
  margin-left: -3px;
  padding-bottom: 3px;
  background-color: #ececec;
`;

const SideList = styled.div`
  display: grid;
  grid-template-rows: repeat(15, 1fr);
  height: 268px;
  padding-top: 5px;
`;

const SideItem = styled.div`
  height: 15px;
  margin-right: 5px;
  border: 1px solid #777;
  border-left: none;
  background-color: #fff;
`;

const Chart = styled.div`
  min-width: 0;
  display: flex;
  flex-direction: column;
`;

const Ruler = styled.div`
  position: relative;
  height: 15px;
  background-color: #fff;
  border-bottom: 1px solid #ccc;
  overflow: hidden;
`;

const Hour = styled.span`
  position: absolute;
  top: 0;
  width: 20px;
  margin-left: ${(props) => (props.$first ? 0 : "-10px")};
  color: #333;
  font-size: 5px;
  line-height: 8px;
  font-weight: bold;
  text-align: ${(props) => (props.$first ? "left" : "center")};

  &::after {
    content: "";
    position: absolute;
    left: ${(props) => (props.$first ? 0 : "10px")};
    top: 8px;
    width: 1px;
    height: 7px;
    background-color: #777;
  }
`;

const Tick = styled.span`
  position: absolute;
  bottom: 0;
  width: 1px;
  height: 2px;
  background-color: #777;
`;

const EndMark = styled.span`
  position: absolute;
  top: 0;
  bottom: 0;
  width: 1px;
  background-color: #999;
`;

const Plot = styled.div`
  position: relative;
  height: 258px;
  overflow: hidden;
  background-color: #fff;
`;

const GridLine = styled.span`
  position: absolute;
  top: 0;
  bottom: 0;
  width: 1px;
  background-color: #dadada;
`;

const Rows = styled.div`
  position: relative;
  display: grid;
  grid-template-rows: repeat(15, 1fr);
  height: 268px;
  padding-top: 5px;
`;

const BlockRow = styled.div`
  position: relative;
  min-height: 0;
`;

const Bar = styled.div`
  position: absolute;
  top: 1px;
  height: 7px;
  background-color: #286bb6;
  border: 1px solid #27508a;
`;

const Piece = styled.div`
  position: absolute;
  top: 7px;
  height: 7px;
  overflow: hidden;
  color: #234;
  background-color: ${(props) => (props.$empty ? "#ff9c0c" : "#90bce9")};
  border: 1px solid ${(props) => (props.$empty ? "#99793f" : "#587ea6")};
  font-family: "Open Sans", sans-serif;
  font-size: 5px;
  line-height: 5px;
  text-align: center;
`;

const Stop = styled.span`
  position: absolute;
  top: 6px;
  color: #333;
  font-family: "Open Sans", sans-serif;
  font-size: 6px;
  line-height: 9px;
  white-space: nowrap;
`;

const ScrollBar = styled.div`
  display: flex;
  height: 9px;
  background-color: #f2f2f2;

  > button {
    width: 11px;
    font-size: 6px;
    line-height: 9px;
  }

  > span {
    flex: 1;
    background-color: #bfbfbf;
  }
`;

const StatusBar = styled.div`
  display: flex;
  gap: 11px;
  height: 13px;
  border-bottom: 2px solid #2f72b8;
  background: linear-gradient(#e2e2e2, #eee);
  font-family: "Open Sans", sans-serif;
  font-size: 5px;
  line-height: 12px;
  white-space: nowrap;

  > span {
    flex: none;
  }
`;

const Clock = styled.span`
  width: 492px;
`;

const Tabs = styled.div`
  display: flex;
  gap: 4px;
  height: 19px;
  padding-top: 4px;
  border-top: 2px solid #f6f6f6;
  box-shadow: inset 0 1px #c8c8c8;
  background: linear-gradient(#e4e4e4, #f2f2f2);
`;

const Tab = styled.button`
  width: ${(props) => (props.$active ? 92 : 90)}px;
  border-radius: 2px 2px 0 0;
  box-shadow: 1px 0 1px #bbb;
  color: #222;
  background-color: ${(props) => (props.$active ? "#c9c9c9" : "#f3f3f3")};
  font-family: "Open Sans", sans-serif;
  font-size: 5px;
`;
